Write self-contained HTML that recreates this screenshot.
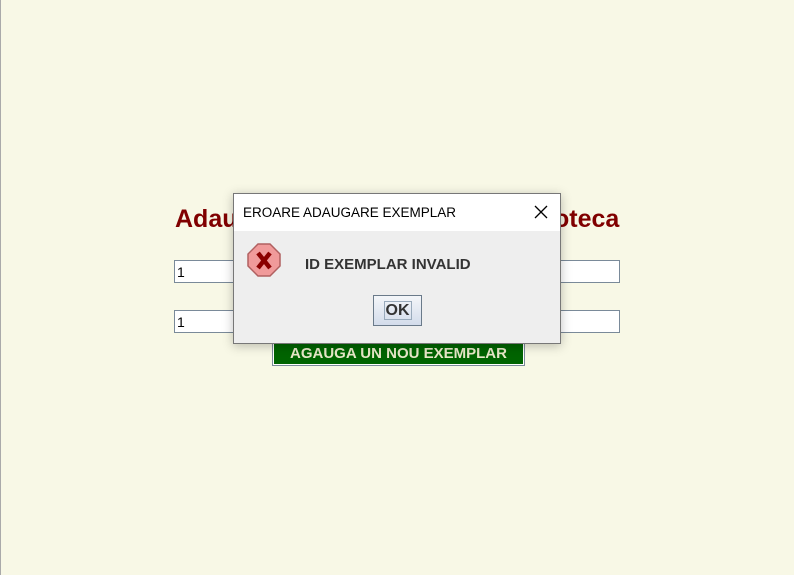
<!DOCTYPE html>
<html><head><style>
body{margin:0;width:794px;height:575px;background:#f8f8e6;position:relative;overflow:hidden;font-family:"Liberation Sans",sans-serif}
.l{position:absolute;left:0;top:0;width:1px;height:575px;background:#aaa}
.h{position:absolute;top:205px;font-size:25px;font-weight:bold;color:#800000}
.tf{position:absolute;left:174px;background:#fff;border:1px solid #7a8a99;font-size:14px;line-height:22px;padding-left:2px;box-sizing:border-box;width:446px;height:23px}
.btn{position:absolute;left:272px;top:342px;width:253px;height:24px;background:#006400;border:1px solid #7a8a99;box-sizing:border-box;color:#e8e8c8;font-weight:bold;font-size:15px;text-align:center;line-height:22px;box-shadow:inset 0 0 0 1px #fff,inset 0 0 0 2px #006400}
.dlg{position:absolute;left:233px;top:193px;width:328px;height:151px;background:#eeeeee;border:1px solid #777;box-sizing:border-box;box-shadow:0 2px 10px rgba(0,0,0,.25)}
.tb{height:37px;background:#fff;font-size:13.5px;line-height:38px;padding-left:9px;color:#000;position:relative}
.x{position:absolute;right:12px;top:11px}
.msg{position:absolute;left:71px;top:62px;font-weight:bold;font-size:15px;color:#333}
.ok{position:absolute;left:139px;top:101px;width:49px;height:31px;border:1px solid #6a7a8a;box-sizing:border-box;background:linear-gradient(#f4f6f9,#d3dceb);font-weight:bold;font-size:16px;color:#333;text-align:center;line-height:29px}
.ok span{border:1px solid #9ab;padding:0 1px}
</style></head><body>
<div class="l"></div>
<div class="h" style="left:175px">Adau</div>
<div class="h" style="left:554px">oteca</div>
<div class="tf" style="top:260px">1</div>
<div class="tf" style="top:310px">1</div>
<div class="btn">AGAUGA UN NOU EXEMPLAR</div>
<div class="dlg">
<div class="tb">EROARE ADAUGARE EXEMPLAR
<svg class="x" width="14" height="14" viewBox="0 0 14 14"><path d="M1 1L13 13M13 1L1 13" stroke="#000" stroke-width="1.3"/></svg></div>
<svg style="position:absolute;left:13px;top:49px" width="36" height="36" viewBox="0 0 36 36">
<polygon points="11,1 23,1 33,11 33,23 23,33 11,33 1,23 1,11" fill="#f09a9a" stroke="#b06060" stroke-width="1.5"/>
<path d="M11 10L23 25M23 10L11 25" stroke="#8b0000" stroke-width="4.5"/></svg>
<div class="msg">ID EXEMPLAR INVALID</div>
<div class="ok"><span>OK</span></div>
</div>
</body></html>
